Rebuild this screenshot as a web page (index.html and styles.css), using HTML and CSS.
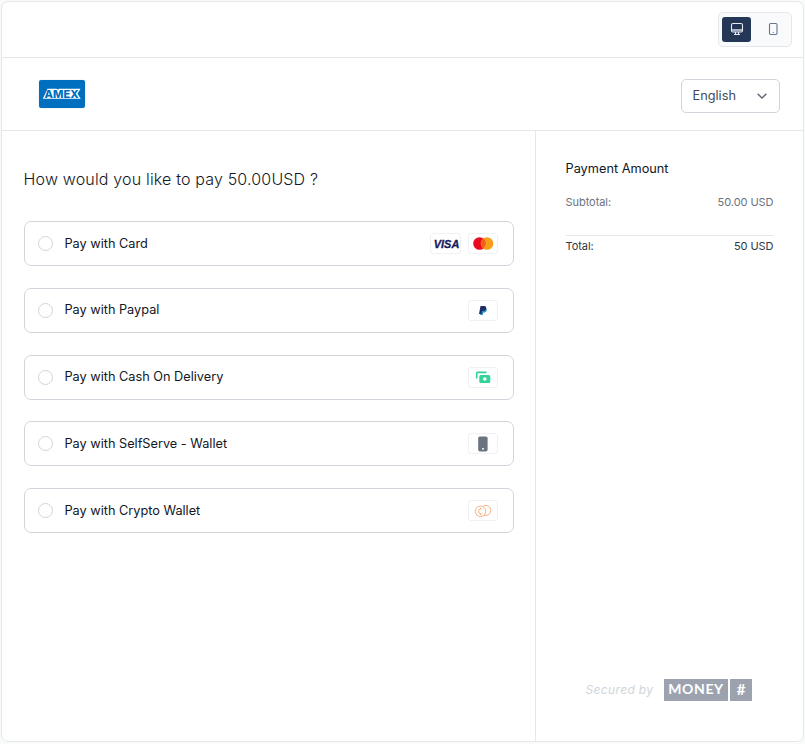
FILE: index.html
```html
<!DOCTYPE html>
<html lang="en">
<head>
<meta charset="utf-8">
<title>Checkout preview</title>
<link rel="stylesheet" href="styles.css">
</head>
<body>
<div class="panel">
  <header class="toolbar">
    <div class="devices">
      <button class="device active" aria-label="Desktop">
        <svg width="14" height="14" viewBox="0 0 14 14" fill="none" stroke="#e8ebf1" stroke-width="1.1"><rect x="1.500" y="1.500" width="11" height="8.500" rx="1.500"/><path d="M5.500 10v2.500M8.500 10v2.500M4 12.500h6"/><path d="M2 7h10v2.500H2z" fill="#a9b3c6" stroke="none"/></svg>
      </button>
      <button class="device" aria-label="Mobile">
        <svg width="14" height="14" viewBox="0 0 14 14" fill="none" stroke="#65748f" stroke-width="1.1"><rect x="3.500" y="1.500" width="7.500" height="11" rx="1.200"/><path d="M6.800 10.500h.9"/></svg>
      </button>
    </div>
  </header>
  <div class="brandbar">
    <svg class="amex" width="48" height="30" viewBox="0 0 48 30"><rect x=".5" y=".5" width="47" height="29" rx="2.5" fill="#edf0f3"/><rect x="1" y="1" width="46" height="28" rx="2" fill="#006fbf"/><path d="M4.800 19.800 9.500 9.700h9l1.500 1 .8-1H42.500l-3 5.100 3.300 5z" fill="#fff"/><text x="6.600" y="18.600" textLength="34" lengthAdjust="spacingAndGlyphs" class="amex-text">AMEX</text></svg>
    <button class="language">English
      <svg width="10" height="6" viewBox="0 0 10 6" fill="none" stroke="#59636f" stroke-width="1.300"><path d="M.6.7 5 5 9.400.7"/></svg>
    </button>
  </div>
  <div class="content">
    <main class="methods">
      <h1>How would you like to pay 50.00USD ?</h1>
      <div class="list">
        <label class="method"><i class="radio"></i><span>Pay with Card</span>
          <b class="badge wide"><svg width="28" height="18" viewBox="0 0 28 18"><text x="1.800" y="12.800" textLength="25.500" lengthAdjust="spacingAndGlyphs" class="visa">VISA</text></svg></b>
          <b class="badge"><svg width="28" height="18" viewBox="0 0 28 18"><circle cx="10.500" cy="8.500" r="6.300" fill="#eb0a20"/><circle cx="18" cy="8.500" r="6.300" fill="#f79e1b"/><path d="M14.250 3.440a6.300 6.300 0 0 1 0 10.120 6.300 6.300 0 0 1 0-10.120z" fill="#f26018"/></svg></b>
        </label>
        <label class="method"><i class="radio"></i><span>Pay with Paypal</span>
          <b class="badge"><svg width="28" height="18" viewBox="0 0 28 18"><path d="M12 7h5q1 .3.800 2-.6 2.800-3.600 2.800l-.4 2.200h-2.600z" fill="#2790c3"/><path d="M11.500 5h3.600q2.600.1 2 2.700-.6 2.300-3.200 2.300h-.9l-.6 2.900H10z" fill="#222d65"/></svg></b>
        </label>
        <label class="method"><i class="radio"></i><span>Pay with Cash On Delivery</span>
          <b class="badge"><svg width="28" height="18" viewBox="0 0 28 18"><path d="M7.700 10.500V5.300q0-1 1-1H17.500" fill="none" stroke="#34d399" stroke-width="1.700"/><rect x="10.300" y="7" width="11" height="8" rx="1.500" fill="#34d399"/><circle cx="15.800" cy="11" r="1.800" fill="#fff"/></svg></b>
        </label>
        <label class="method"><i class="radio"></i><span>Pay with SelfServe - Wallet</span>
          <b class="badge"><svg width="28" height="18" viewBox="0 0 28 18"><rect x="9.200" y="1.500" width="9.400" height="15" rx="1.700" fill="#6b7280"/><rect x="13" y="13.200" width="2" height="1.300" fill="#fff"/></svg></b>
        </label>
        <label class="method"><i class="radio"></i><span>Pay with Crypto Wallet</span>
          <b class="badge"><svg width="28" height="18" viewBox="0 0 28 18" fill="none" stroke="#f9a66f" stroke-width=".9"><circle cx="11.500" cy="9.300" r="5.200"/><path d="M13.300 7.600q-.8-.8-1.700-.8-2 .2-2 2.500t2 2.500q.9 0 1.700-.8M11.500 5.800v1M11.500 11.800v1M14 4.400q1.200-1 2.900-1a5 5 0 0 1 0 10q-1 0-1.800-.4"/></svg></b>
        </label>
      </div>
    </main>
    <aside class="summary">
      <h2>Payment Amount</h2>
      <div class="row muted"><span>Subtotal:</span><span>50.00 USD</span></div>
      <div class="row total"><span>Total:</span><span>50 USD</span></div>
      <footer class="secured"><em>Secured by</em><span class="money">MONEY</span><span class="hash">#</span></footer>
    </aside>
  </div>
</div>
</body>
</html>
```
FILE: styles.css
```css
* { box-sizing: border-box; }
body { margin: 0; height: 744px; padding: 1px 1px 2px; background: #f9fafa; font-family: Inter, "Liberation Sans", sans-serif; color: #111827; overflow: hidden; }
button { font: inherit; padding: 0; }
svg { display: block; }
.panel { height: 741px; border: 1px solid #e5e7eb; border-radius: 7px; background: #fff; display: flex; flex-direction: column; }
.toolbar { height: 56px; flex: none; border-bottom: 1px solid #e5e7eb; display: flex; justify-content: flex-end; padding: 10px 11px 0 0; }
.devices { width: 74px; height: 35px; border: 1px solid #e5e7eb; border-radius: 5px; background: #f9fafb; padding: 4px 3px; display: flex; gap: 7px; }
.device { width: 29px; height: 25px; border: 0; border-radius: 3px; background: none; display: flex; align-items: center; justify-content: center; padding-bottom: 1px; }
.active { background: #243757; }
.brandbar { height: 73px; flex: none; border-bottom: 1px solid #e5e7eb; display: flex; justify-content: space-between; align-items: flex-start; padding: 21px 23px 0 36px; }
.amex-text { font: 800 11px Inter, sans-serif; fill: #006fbf; }
.language { width: 99px; height: 34px; border: 1px solid #d1d5db; border-radius: 5px; background: #fff; color: #414b5a; font-size: 12.75px; display: flex; align-items: center; justify-content: space-between; padding: 0 12px 1px 10.500px; }
.content { flex: 1; display: flex; }
.methods { width: 534px; border-right: 1px solid #e5e7eb; padding: 37px 21px 0 22px; }
h1 { margin: 0 0 0 -.5px; font-size: 16px; line-height: 22px; font-weight: 300; letter-spacing: .17px; }
.list { margin-top: 31px; display: flex; flex-direction: column; gap: 21.75px; }
.method { height: 45px; border: 1px solid #d1d5db; border-radius: 7px; display: flex; align-items: center; padding: 0 15px 0 13.400px; font-size: 12.75px; letter-spacing: -.01px; }
.radio { width: 15px; height: 15px; border: 1px solid #d1d5db; border-radius: 50%; margin-right: 11px; }
.method span { flex: 1; padding-bottom: 1px; }
.badge { width: 30px; height: 21px; border: 1px solid #f0f1f3; border-radius: 3px; display: flex; align-items: center; justify-content: center; }
.wide { width: 31px; margin-right: 7px; }
.visa { font: italic 700 10.500px "Liberation Sans", sans-serif; fill: #18185e; stroke: #18185e; stroke-width: .3px; }
.summary { flex: 1; display: flex; flex-direction: column; padding: 28px 29.500px 40px 29.500px; }
h2 { margin: 0; font-size: 12.75px; line-height: 20px; font-weight: 400; }
.row { display: flex; justify-content: space-between; font-size: 11px; line-height: 16px; letter-spacing: -.05px; }
.muted { margin-top: 15px; color: #6b7280; }
.total { margin-top: 25px; border-top: 1px solid #e5e7eb; padding-top: 2px; color: #2e3744; }
.secured { margin: auto 0 0 20px; display: flex; align-items: center; height: 22px; color: #d1d5db; font-size: 12px; }
.secured em { width: 78.500px; letter-spacing: .35px; padding-bottom: 1px; }
.money, .hash { background: #9ca3af; color: #fff; height: 22px; line-height: 20px; text-align: center; font-family: Lato, sans-serif; font-weight: 700; font-size: 14px; }
.money { width: 64px; letter-spacing: .6px; margin-right: 2px; }
.hash { width: 22px; font-size: 15px; }
```
